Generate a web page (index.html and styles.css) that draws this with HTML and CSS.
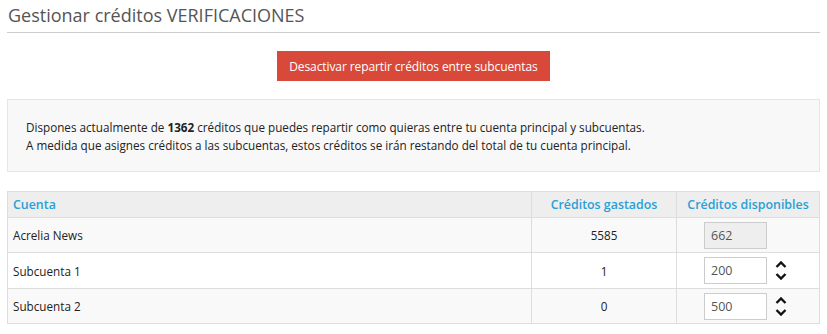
FILE: index.html
```html
<!DOCTYPE html>
<html lang="es">
<head>
  <meta charset="UTF-8">
  <title>Gestionar créditos</title>
  <link rel="stylesheet" href="styles.css">
</head>
<body>
  <div class="page">
    <h1 class="title">Gestionar créditos VERIFICACIONES</h1>

    <div class="actions">
      <button class="btn-danger">Desactivar repartir créditos entre subcuentas</button>
    </div>

    <div class="info">
      <p>Dispones actualmente de <strong>1362</strong> créditos que puedes repartir como quieras entre tu cuenta principal y subcuentas.</p>
      <p>A medida que asignes créditos a las subcuentas, estos créditos se irán restando del total de tu cuenta principal.</p>
    </div>

    <table class="credits">
      <thead>
        <tr>
          <th class="col-account">Cuenta</th>
          <th class="col-spent">Créditos gastados</th>
          <th class="col-available">Créditos disponibles</th>
        </tr>
      </thead>
      <tbody>
        <tr>
          <td>Acrelia News</td>
          <td class="num">5585</td>
          <td class="avail"><input class="credit-input locked" type="text" value="662" readonly></td>
        </tr>
        <tr>
          <td>Subcuenta 1</td>
          <td class="num">1</td>
          <td class="avail">
            <input class="credit-input" type="text" value="200">
            <span class="spinner">
              <svg width="12" height="7" viewBox="0 0 12 7"><path d="M1.5 6 L6 1.5 L10.5 6" fill="none" stroke="#111" stroke-width="2.4"/></svg>
              <svg width="12" height="7" viewBox="0 0 12 7"><path d="M1.5 1 L6 5.5 L10.5 1" fill="none" stroke="#111" stroke-width="2.4"/></svg>
            </span>
          </td>
        </tr>
        <tr>
          <td>Subcuenta 2</td>
          <td class="num">0</td>
          <td class="avail">
            <input class="credit-input" type="text" value="500">
            <span class="spinner">
              <svg width="12" height="7" viewBox="0 0 12 7"><path d="M1.5 6 L6 1.5 L10.5 6" fill="none" stroke="#111" stroke-width="2.4"/></svg>
              <svg width="12" height="7" viewBox="0 0 12 7"><path d="M1.5 1 L6 5.5 L10.5 1" fill="none" stroke="#111" stroke-width="2.4"/></svg>
            </span>
          </td>
        </tr>
      </tbody>
    </table>
  </div>
</body>
</html>
```

FILE: styles.css
```css
body {
  margin: 0;
  font-family: 'Open Sans', 'Liberation Sans', sans-serif;
  font-size: 11.7px;
  color: #222;
  background-color: #fff;
}

.page {
  padding: 0 7px;
}

.title {
  margin: 0;
  padding: 0 1px;
  height: 32px;
  font-size: 18px;
  font-weight: 400;
  line-height: 30px;
  color: #555;
  border-bottom: 1px solid #ccc;
}

.actions {
  display: flex;
  justify-content: center;
  padding-top: 18px;
}

.btn-danger {
  height: 30px;
  padding: 0 12px;
  border: none;
  border-radius: 0;
  background-color: #d9493a;
  color: #fff;
  font-family: inherit;
  font-size: 12px;
  letter-spacing: -0.1px;
  cursor: pointer;
}

.info {
  margin-top: 18px;
  height: 71px;
  padding: 0 18px;
  display: flex;
  flex-direction: column;
  justify-content: center;
  background-color: #f8f8f8;
  border: 1px solid #e6e6e6;
}

.info p {
  margin: 0;
  line-height: 18px;
}

.info strong {
  font-weight: 700;
}

.credits {
  margin-top: 19px;
  width: 100%;
  border-collapse: collapse;
  border: 1px solid #ddd;
}

.credits th {
  height: 25px;
  padding: 0 5px;
  background-color: #eee;
  color: #2a9fd6;
  font-size: 12.4px;
  font-weight: 600;
  text-align: left;
  border: 1px solid #ddd;
}

.credits th.col-spent,
.credits th.col-available {
  text-align: center;
}

.col-spent {
  width: 134px;
}

.col-available {
  width: 132px;
}

.credits td {
  height: 34px;
  padding: 0 5px;
  border: 1px solid #ddd;
}

.credits tbody tr:nth-child(2) td {
  height: 35px;
}

.credits tbody tr:nth-child(odd) {
  background-color: #f9f9f9;
}

.credits td.num {
  text-align: center;
}

.credits td.avail {
  padding-left: 27px;
}

.credit-input {
  box-sizing: border-box;
  width: 63px;
  height: 27px;
  padding: 0 6px;
  border: 1px solid #ccc;
  border-radius: 0;
  background-color: #fff;
  color: #555;
  font-family: inherit;
  font-size: 12.5px;
  vertical-align: middle;
  outline: none;
}

.credit-input.locked {
  background-color: #eee;
}

.spinner {
  display: inline-flex;
  flex-direction: column;
  gap: 5px;
  margin-left: 5px;
  vertical-align: middle;
}

.spinner svg {
  display: block;
}
```
